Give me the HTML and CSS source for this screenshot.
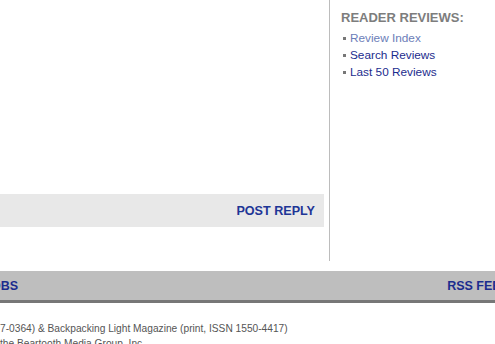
FILE: index.html
```html
<!DOCTYPE html>
<html lang="en">
<head>
    <meta charset="UTF-8">
    <meta name="viewport" content="width=device-width, initial-scale=1.0">
    <title>Reader Reviews</title>
    <link rel="stylesheet" href="styles.css">
</head>
<body>
    <div class="page">
        <div class="main">
            <div class="thread"></div>
            <div class="reply-bar">
                <a href="#" class="reply-link">POST REPLY</a>
            </div>
        </div>

        <div class="sidebar">
            <div class="sidebar-title">READER REVIEWS:</div>
            <ul class="sidebar-list">
                <li><a href="#" class="visited">Review Index</a></li>
                <li><a href="#">Search Reviews</a></li>
                <li><a href="#">Last 50 Reviews</a></li>
            </ul>
        </div>
    </div>

    <div class="footer-nav">
        <a href="#">JOBS</a>
        <a href="#">RSS FEEDS</a>
    </div>

    <div class="footer-copy">
        <div>7-0364) &amp; Backpacking Light Magazine (print, ISSN 1550-4417)</div>
        <div>the Beartooth Media Group, Inc.</div>
    </div>
</body>
</html>
```

FILE: styles.css
```css
body {
    font-family: "Liberation Sans", Arial, sans-serif;
    margin: 0;
    background-color: white;
    overflow: hidden;
}
a {
    text-decoration: none;
    color: #1b2c8e;
}
.page {
    display: flex;
    height: 261px;
}
.main {
    width: 324px;
    padding-right: 5px;
    border-right: 1px solid #bcbcbc;
}
.thread {
    height: 194px;
}
.reply-bar {
    height: 33px;
    background-color: #e8e8e8;
    display: flex;
    align-items: center;
    justify-content: flex-end;
    padding-right: 9px;
}
.reply-link {
    font-size: 12.6px;
    font-weight: bold;
    color: #1e3596;
}
.sidebar {
    padding: 10px 0 0 11px;
}
.sidebar-title {
    font-size: 13px;
    font-weight: bold;
    color: #7d7d7d;
    margin-bottom: 5px;
}
.sidebar-list {
    list-style: none;
    margin: 0;
    padding: 0;
}
.sidebar-list li {
    font-size: 11.8px;
    line-height: 17px;
    display: flex;
    align-items: center;
}
.sidebar-list li::before {
    content: "";
    width: 3px;
    height: 3px;
    background-color: #777;
    margin: 0 4px 0 2px;
}
.sidebar-list .visited {
    color: #6b7db8;
}
.footer-nav {
    margin: 10px -23px 0 -16px;
    height: 29px;
    background-color: #bebebe;
    border-bottom: 3px solid #777;
    display: flex;
    align-items: center;
    justify-content: space-between;
    font-size: 12.5px;
    font-weight: bold;
}
.footer-copy {
    margin-top: 18px;
    font-size: 10.2px;
    line-height: 15px;
    color: #555;
}
```
